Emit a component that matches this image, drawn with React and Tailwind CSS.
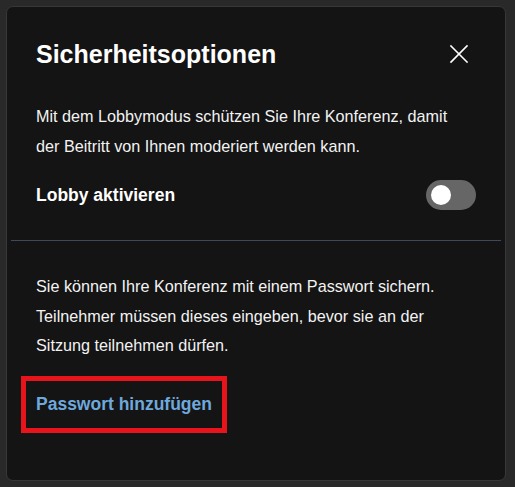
import React from 'react';

const CloseIcon = () => (
    <svg width="20" height="20" viewBox="0 0 20 20" fill="none" stroke="#ffffff" strokeWidth="1.6" strokeLinecap="square">
        <path d="M2 2 L18 18 M18 2 L2 18" />
    </svg>
);

const Toggle = ({ on = false }) => (
    <div className="w-[50px] h-[30px] rounded-full bg-[#666666] flex items-center px-[5px]">
        <div className={on ? 'ml-auto w-[20px] h-[20px] rounded-full bg-white' : 'w-[20px] h-[20px] rounded-full bg-white'} />
    </div>
);

const SecurityDialog = () => {
    return (
        <div className="h-full rounded-[7px] border border-[#373737] bg-[#141414] text-white">
            <div className="pt-[31px] pl-[29px] pr-[36px] flex items-center justify-between">
                <h2 className="text-[25px] leading-[32px] font-bold">Sicherheitsoptionen</h2>
                <button className="w-[20px] h-[20px] flex items-center justify-center">
                    <CloseIcon />
                </button>
            </div>

            <div className="px-[29px]">
                <p className="mt-[32px] max-w-[430px] text-[16.2px] leading-[29.5px] text-[#f2f2f2]">
                    Mit dem Lobbymodus schützen Sie Ihre Konferenz, damit der Beitritt von Ihnen moderiert werden kann.
                </p>
                <div className="mt-[19px] h-[30px] flex items-center justify-between">
                    <span className="text-[17.5px] leading-[30px] font-bold">Lobby aktivieren</span>
                    <Toggle />
                </div>
            </div>

            <div className="mx-[4px] mt-[30px] h-px bg-[#3e4a5a]" />

            <div className="px-[29px]">
                <p className="mt-[31px] max-w-[430px] text-[16.2px] leading-[29.5px] text-[#f2f2f2]">
                    Sie können Ihre Konferenz mit einem Passwort sichern. Teilnehmer müssen dieses eingeben, bevor sie an der Sitzung teilnehmen dürfen.
                </p>
            </div>
            <div className="pl-[14px] mt-[15px]">
                <button className="border-[5px] border-[#e8141c] h-[57px] px-[10px] text-[17.5px] font-bold text-[#6fa8dc]">
                    Passwort hinzufügen
                </button>
            </div>
        </div>
    );
};

export default function App() {
    return (
        <div className="w-[515px] h-[487px] bg-[#292929] pt-[6px] pl-[6px] pr-[9px] pb-[6px]" style={{ fontFamily: '"Liberation Sans", Arial, sans-serif' }}>
            <SecurityDialog />
        </div>
    );
}
